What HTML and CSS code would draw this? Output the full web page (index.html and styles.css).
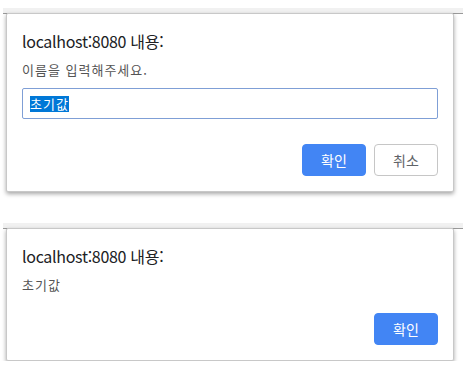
FILE: index.html
```html
<!DOCTYPE html>
<html lang="ko">
<head>
  <meta charset="UTF-8" />
  <meta name="viewport" content="width=device-width, initial-scale=1.0" />
  <title>prompt / alert</title>
  <link rel="stylesheet" href="styles.css">
</head>
<body>
  <div class="scene">
    <div class="page-strip"></div>
    <div class="dialog">
      <div class="dialog-title">localhost:8080 내용:</div>
      <div class="dialog-message">이름을 입력해주세요.</div>
      <div class="prompt-input"><span class="selected">초기값</span></div>
      <div class="buttons prompt-buttons">
        <button class="btn btn-primary">확인</button>
        <button class="btn btn-secondary">취소</button>
      </div>
    </div>
  </div>

  <div class="scene second">
    <div class="page-strip"></div>
    <div class="dialog">
      <div class="dialog-title">localhost:8080 내용:</div>
      <div class="dialog-message">초기값</div>
      <div class="buttons alert-buttons">
        <button class="btn btn-primary">확인</button>
      </div>
    </div>
  </div>
</body>
</html>
```

FILE: styles.css
```css
body {
  margin: 0;
  background: #fff;
  font-family: "Noto Sans CJK KR", sans-serif;
  color: #202124;
}
.scene {
  padding-top: 8px;
}
.scene.second {
  padding-top: 31px;
}
.page-strip {
  height: 5px;
  margin-left: 3px;
  background: #f1f1f1;
  border-bottom: 1px solid #9a9a9a;
}
.dialog {
  position: relative;
  width: 416px;
  margin: -1px 0 0 6px;
  padding: 17px 15px 15px 15px;
  background: #fff;
  border: 1px solid #c8c8c8;
  border-radius: 2px;
  box-shadow: 0 2px 4px rgba(0, 0, 0, 0.35);
}
.dialog-title {
  font-size: 16px;
  line-height: 20px;
  letter-spacing: -0.3px;
  color: #202124;
}
.dialog-message {
  margin-top: 10px;
  font-size: 13px;
  line-height: 18px;
  letter-spacing: 1px;
  color: #555;
}
.prompt-input {
  margin-top: 9px;
  height: 29px;
  padding: 0 7px;
  border: 1px solid #7f9fd6;
  border-radius: 2px;
  display: flex;
  align-items: center;
  font-size: 13px;
}
.selected {
  background: #0078d7;
  color: #fff;
  line-height: 16px;
  letter-spacing: 1px;
}
.buttons {
  display: flex;
  justify-content: flex-end;
  gap: 8px;
}
.prompt-buttons {
  margin-top: 25px;
}
.alert-buttons {
  margin-top: 19px;
}
.btn {
  width: 64px;
  height: 32px;
  border-radius: 4px;
  font-family: inherit;
  font-size: 14px;
  padding: 0;
}
.btn-primary {
  background: #4285f4;
  border: 1px solid #4285f4;
  color: #fff;
}
.btn-secondary {
  background: #fff;
  border: 1px solid #c6c6c6;
  color: #5f6368;
}
```
